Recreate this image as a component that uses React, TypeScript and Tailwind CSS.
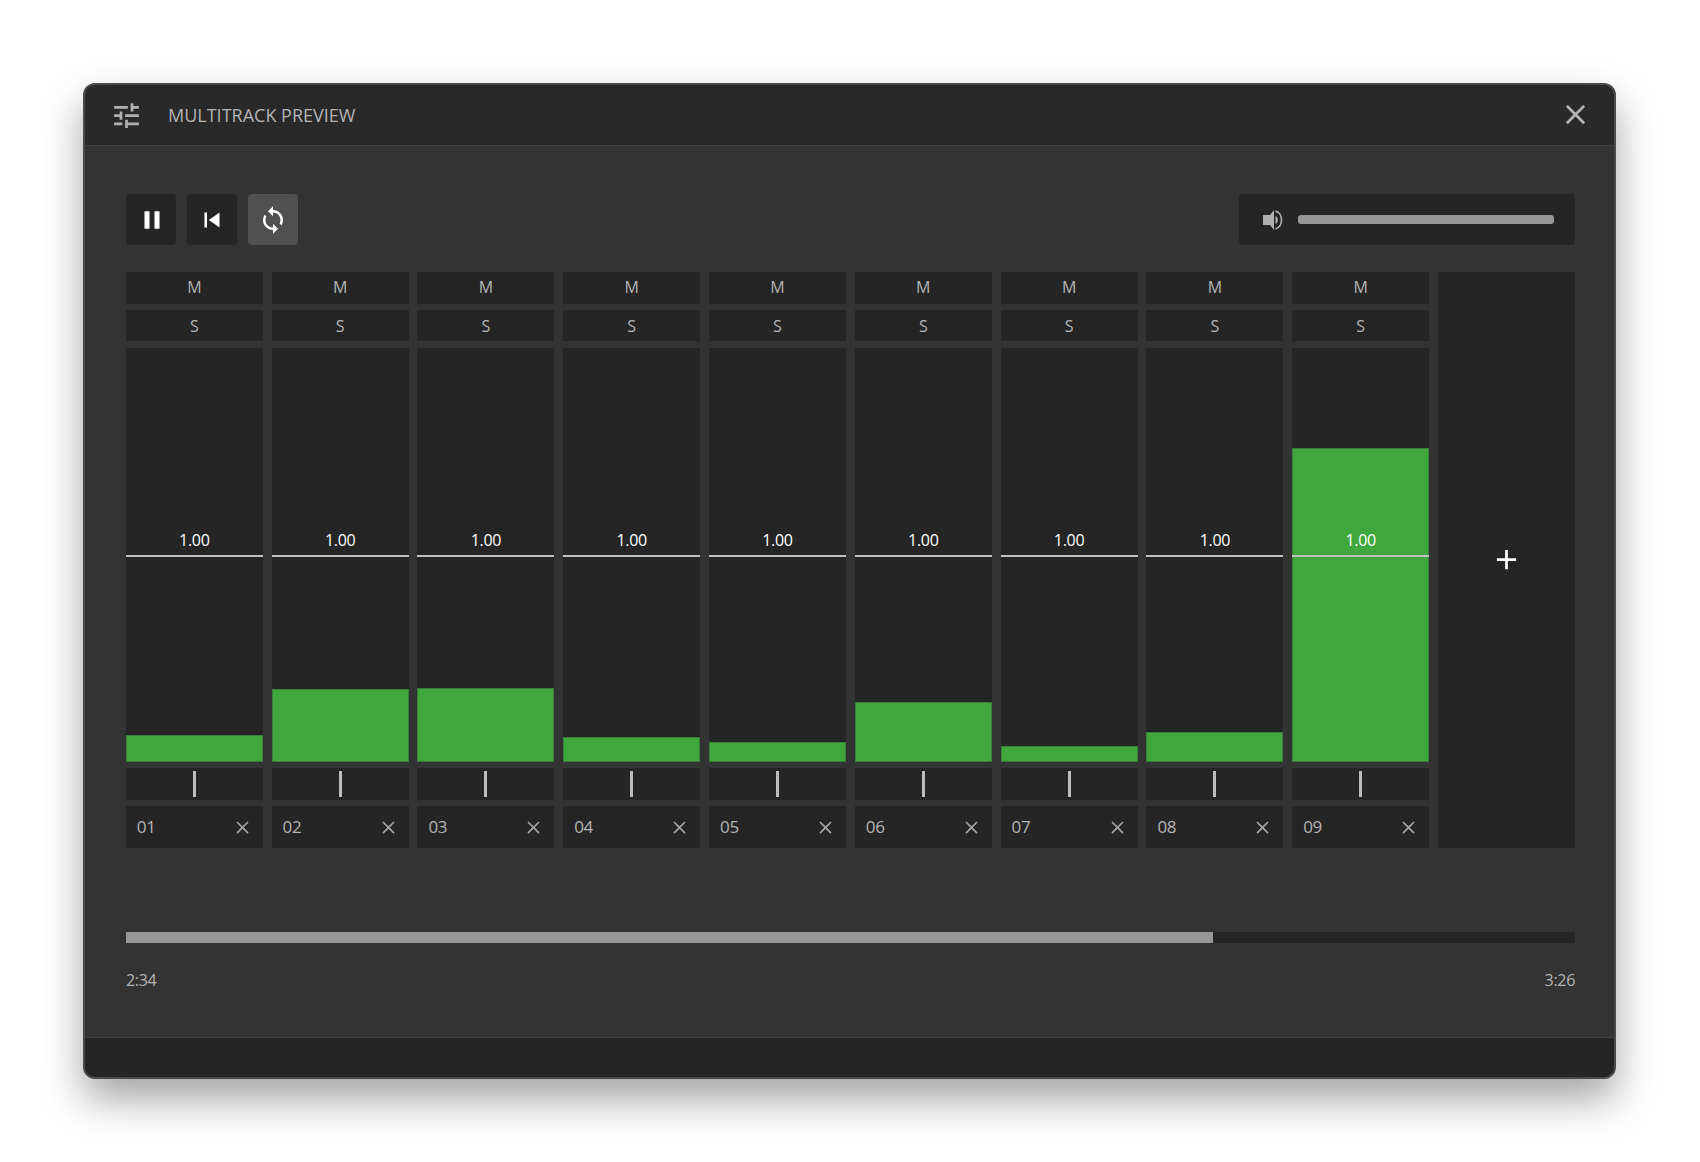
import { MdTune, MdClose, MdPause, MdSkipPrevious, MdLoop, MdAdd } from 'react-icons/md';

const tracks = [
  { name: '01', level: 27 },
  { name: '02', level: 73 },
  { name: '03', level: 74 },
  { name: '04', level: 25 },
  { name: '05', level: 20 },
  { name: '06', level: 60 },
  { name: '07', level: 16 },
  { name: '08', level: 30 },
  { name: '09', level: 314 },
];

function SpeakerIcon() {
  return (
    <svg width="20" height="20" viewBox="0 0 20 20" fill="none" className="text-[#b0b0b0]">
      <path d="M0 5h7l4-5v20l-4-5H0z" fill="currentColor" />
      <path d="M12.500 1.200c3.600.7 6 4.300 6 8.800s-2.400 8.100-6 8.800" stroke="currentColor" strokeWidth="1.700" />
      <path d="M12.500 6c1.500.6 2.300 2.200 2.300 4s-.8 3.400-2.300 4z" fill="currentColor" />
    </svg>
  );
}

function Track({ name, level }: { name: string; level: number }) {
  return (
    <div className="flex flex-col">
      <div className="h-[32px] pb-[2px] bg-[#252525] flex items-center justify-center text-[16px] text-[#b4b4b4]">M</div>
      <div className="h-[31px] mt-[6px] bg-[#252525] flex items-center justify-center text-[16px] text-[#b4b4b4]">S</div>
      <div className="relative h-[414px] mt-[7px] bg-[#252525] flex flex-col justify-end">
        <div className="bg-[#3fa73c] border border-[#37803a]" style={{ height: level }} />
        <div className="absolute left-0 right-0 top-[207px] h-[2px] bg-[#c0c0c0]" />
        <div className="absolute left-0 right-0 top-[180px] text-center text-[16px] leading-[24px] tracking-[-0.3px] text-white">1.00</div>
      </div>
      <div className="h-[32px] mt-[6px] bg-[#252525] flex items-center justify-center">
        <div className="w-[3px] h-[26px] bg-[#bdbdbd]" />
      </div>
      <div className="h-[42px] mt-[6px] bg-[#252525] flex items-center justify-between pl-[11px] pr-[10px] text-[#b4b4b4]">
        <span className="text-[17px] tracking-[-0.3px]">{name}</span>
        <MdClose size={21} className="text-[#a3a3a3]" />
      </div>
    </div>
  );
}

export default function App() {
  return (
    <div className="min-h-[1162px] bg-white pt-[83px] pl-[83px] font-['Open_Sans',sans-serif]">
      <div className="flex flex-col w-[1533px] h-[996px] bg-[#333333] border-2 border-[#4b4b4b] rounded-[12px] overflow-hidden shadow-[0_20px_40px_rgba(0,0,0,0.36)]">
        <header className="flex items-center justify-between h-[61px] shrink-0 bg-[#292929] border-b border-[#404040] pl-[25px] pr-[22px]">
          <div className="flex items-center gap-[25px]">
            <MdTune size={33} className="text-[#b0b0b0]" />
            <span className="text-[18px] text-[#b4b4b4]">MULTITRACK PREVIEW</span>
          </div>
          <MdClose size={33} className="mb-[2px] text-[#b4b4b4]" />
        </header>

        <main className="flex-1 pl-[41px] pr-[39px] pt-[48px]">
          <div className="flex items-center justify-between h-[51px]">
            <div className="flex gap-[11px]">
              <button className="w-[50px] h-[51px] pl-[1px] rounded-[4px] bg-[#252525] flex items-center justify-center text-white">
                <MdPause size={30} />
              </button>
              <button className="w-[50px] h-[51px] rounded-[4px] bg-[#252525] flex items-center justify-center text-white">
                <MdSkipPrevious size={30} />
              </button>
              <button className="w-[50px] h-[51px] rounded-[4px] bg-[#505050] flex items-center justify-center text-white">
                <MdLoop size={30} />
              </button>
            </div>
            <div className="flex items-center w-[336px] h-[51px] rounded-[4px] bg-[#252525] pl-[24px] pr-[21px] gap-[15px]">
              <SpeakerIcon />
              <div className="flex-1 h-[9px] rounded-[3px] bg-[#979797]" />
            </div>
          </div>

          <div className="grid grid-cols-10 gap-x-[8.78px] mt-[27px] -ml-[0.2px]">
            {tracks.map(t => (
              <Track key={t.name} name={t.name} level={t.level} />
            ))}
            <div className="pb-[2px] bg-[#252525] flex items-center justify-center text-white">
              <MdAdd size={33} />
            </div>
          </div>

          <div className="h-[11px] mt-[84px] bg-[#252525]">
            <div className="h-full w-[75%] bg-[#979797]" />
          </div>
          <div className="flex justify-between mt-[25px] text-[16px] leading-[24px] tracking-[-0.3px] text-[#b4b4b4]">
            <span>2:34</span>
            <span>3:26</span>
          </div>
        </main>

        <footer className="h-[40px] shrink-0 bg-[#252525] border-t border-[#404040]" />
      </div>
    </div>
  );
}
